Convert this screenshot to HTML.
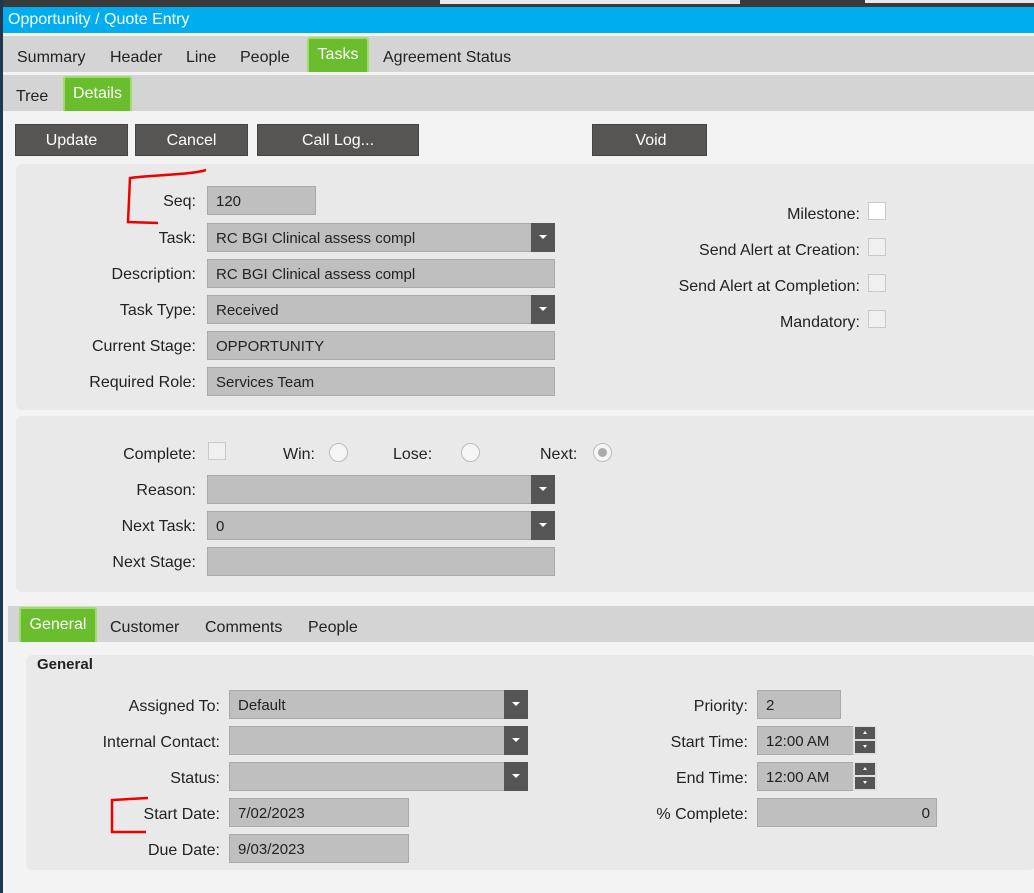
<!DOCTYPE html>
<html><head><meta charset="utf-8"><style>
*{box-sizing:border-box;margin:0;padding:0}
body{width:1034px;height:893px;overflow:hidden;background:#f3f3f4;font-family:"Liberation Sans",sans-serif;font-size:16px;color:#222;position:relative}
.a{position:absolute}
.lbl{position:absolute;text-align:right;white-space:nowrap}
.fld{position:absolute;background:#bfbfbf;border:1px solid #a9a9a9;height:29px;padding-left:8px;line-height:29px;font-size:15px;white-space:nowrap}
.dd{position:absolute;right:-1px;top:-1px;width:24px;height:29px;background:#555;}
.dd:after{content:"";position:absolute;left:8px;top:12px;border-left:4px solid transparent;border-right:4px solid transparent;border-top:4px solid #fff}
.btn{position:absolute;background:#575553;color:#fff;text-align:center;height:32px;line-height:32px;font-size:16px;border:1px solid #444}
.tab{position:absolute;font-size:16px}
.gt{position:absolute;background:#6abd2d;color:#fff;border:2px solid #9fdc6c;border-bottom:none;border-radius:3px 3px 0 0;text-align:center}
.cb{position:absolute;width:18px;height:18px;border:1px solid #c8c8c8;background:#f0f0f0}
.rd{position:absolute;width:19px;height:19px;border:1px solid #bcbcbc;border-radius:50%;background:#f5f5f5}
.sp{position:absolute;width:24px;height:29px;background:#e0e0e0;}
.sp i{position:absolute;left:2px;width:20px;height:12px;background:#555}
.sp i:after{content:"";position:absolute;left:8px;top:4px;border-left:2px solid transparent;border-right:2px solid transparent}
.sp .u{top:1px}.sp .u:after{border-bottom:3px solid #fff}
.sp .d{top:15px}.sp .d:after{border-top:3px solid #fff}
</style></head><body>
<div class="a" style="left:0;top:0;width:1034px;height:7px;background:#3a3a3a"></div>
<div class="a" style="left:440px;top:0;width:300px;height:4px;background:#e8e8e8"></div>
<div class="a" style="left:865px;top:0;width:169px;height:3px;background:#e8e8e8"></div>
<div class="a" style="left:0;top:0;width:3px;height:893px;background:#1c3a4f"></div>
<div class="a" style="left:3px;top:7px;width:1031px;height:26px;background:#00adef;color:#fff;font-size:16px;line-height:26px;padding-left:5px">Opportunity / Quote Entry</div>
<div class="a" style="left:3px;top:36px;width:1031px;height:36px;background:#d4d4d4"></div>
<div class="tab" style="left:17px;top:49px">Summary</div>
<div class="tab" style="left:110px;top:49px">Header</div>
<div class="tab" style="left:186px;top:49px">Line</div>
<div class="tab" style="left:240px;top:49px">People</div>
<div class="gt" style="left:307px;top:37px;width:62px;height:35px;line-height:32px">Tasks</div>
<div class="tab" style="left:383px;top:49px">Agreement Status</div>
<div class="a" style="left:3px;top:75px;width:1031px;height:36px;background:#d4d4d4"></div>
<div class="tab" style="left:16px;top:88px">Tree</div>
<div class="gt" style="left:63px;top:76px;width:69px;height:35px;line-height:32px">Details</div>

<div class="btn" style="left:15px;top:124px;width:113px">Update</div>
<div class="btn" style="left:135px;top:124px;width:113px">Cancel</div>
<div class="btn" style="left:257px;top:124px;width:162px">Call Log...</div>
<div class="btn" style="left:592px;top:124px;width:115px;padding-left:3px">Void</div>

<div class="a" style="left:16px;top:164px;width:1030px;height:246px;background:#e9e9e9;border-radius:6px"></div>
<div class="lbl" style="right:838px;top:193px">Seq:</div><div class="fld" style="left:207px;top:186px;width:109px">120</div>
<div class="lbl" style="right:838px;top:230px">Task:</div><div class="fld" style="left:207px;top:223px;width:348px">RC BGI Clinical assess compl<div class="dd"></div></div>
<div class="lbl" style="right:838px;top:266px">Description:</div><div class="fld" style="left:207px;top:259px;width:348px">RC BGI Clinical assess compl</div>
<div class="lbl" style="right:838px;top:302px">Task Type:</div><div class="fld" style="left:207px;top:295px;width:348px">Received<div class="dd"></div></div>
<div class="lbl" style="right:838px;top:338px">Current Stage:</div><div class="fld" style="left:207px;top:331px;width:348px">OPPORTUNITY</div>
<div class="lbl" style="right:838px;top:374px">Required Role:</div><div class="fld" style="left:207px;top:367px;width:348px">Services Team</div>
<div class="lbl" style="right:174px;top:206px">Milestone:</div><div class="cb" style="left:868px;top:202px;background:#fff"></div>
<div class="lbl" style="right:174px;top:242px">Send Alert at Creation:</div><div class="cb" style="left:868px;top:238px"></div>
<div class="lbl" style="right:174px;top:278px">Send Alert at Completion:</div><div class="cb" style="left:868px;top:274px"></div>
<div class="lbl" style="right:174px;top:314px">Mandatory:</div><div class="cb" style="left:868px;top:310px"></div>

<div class="a" style="left:16px;top:416px;width:1030px;height:176px;background:#e9e9e9;border-radius:6px"></div>
<div class="lbl" style="right:838px;top:446px">Complete:</div><div class="cb" style="left:208px;top:442px"></div>
<div class="lbl" style="left:283px;top:446px">Win:</div><div class="rd" style="left:329px;top:443px"></div>
<div class="lbl" style="left:393px;top:446px">Lose:</div><div class="rd" style="left:461px;top:443px"></div>
<div class="lbl" style="left:540px;top:446px">Next:</div><div class="rd" style="left:593px;top:443px"><div class="a" style="left:4px;top:4px;width:9px;height:9px;border-radius:50%;background:#aaa"></div></div>
<div class="lbl" style="right:838px;top:482px">Reason:</div><div class="fld" style="left:207px;top:475px;width:348px"><div class="dd"></div></div>
<div class="lbl" style="right:838px;top:518px">Next Task:</div><div class="fld" style="left:207px;top:511px;width:348px">0<div class="dd"></div></div>
<div class="lbl" style="right:838px;top:554px">Next Stage:</div><div class="fld" style="left:207px;top:547px;width:348px"></div>

<div class="a" style="left:8px;top:606px;width:1026px;height:36px;background:#d4d4d4"></div>
<div class="gt" style="left:19px;top:607px;width:78px;height:35px;line-height:32px">General</div>
<div class="tab" style="left:110px;top:619px">Customer</div>
<div class="tab" style="left:205px;top:619px">Comments</div>
<div class="tab" style="left:308px;top:619px">People</div>

<div class="a" style="left:26px;top:655px;width:1010px;height:215px;background:#e9e9e9;border-radius:6px"></div>
<div class="a" style="left:37px;top:656px;font-weight:bold;font-size:15px">General</div>
<div class="lbl" style="right:814px;top:698px">Assigned To:</div><div class="fld" style="left:229px;top:690px;width:299px">Default<div class="dd"></div></div>
<div class="lbl" style="right:814px;top:734px">Internal Contact:</div><div class="fld" style="left:229px;top:726px;width:299px"><div class="dd"></div></div>
<div class="lbl" style="right:814px;top:770px">Status:</div><div class="fld" style="left:229px;top:762px;width:299px"><div class="dd"></div></div>
<div class="lbl" style="right:814px;top:806px">Start Date:</div><div class="fld" style="left:229px;top:798px;width:180px">7/02/2023</div>
<div class="lbl" style="right:814px;top:842px">Due Date:</div><div class="fld" style="left:229px;top:834px;width:180px">9/03/2023</div>
<div class="lbl" style="right:286px;top:698px">Priority:</div><div class="fld" style="left:757px;top:690px;width:84px">2</div>
<div class="lbl" style="right:286px;top:734px">Start Time:</div><div class="fld" style="left:757px;top:726px;width:120px">12:00 AM<div class="sp" style="right:-1px;top:-1px"><i class="u"></i><i class="d"></i></div></div>
<div class="lbl" style="right:286px;top:770px">End Time:</div><div class="fld" style="left:757px;top:762px;width:120px">12:00 AM<div class="sp" style="right:-1px;top:-1px"><i class="u"></i><i class="d"></i></div></div>
<div class="lbl" style="right:286px;top:806px">% Complete:</div><div class="fld" style="left:757px;top:798px;width:180px;text-align:right;padding-right:6px">0</div>

<svg class="a" style="left:0;top:0" width="1034" height="893">
<path d="M206 170 C190 175 150 175 130 178 L128 222 L158 223" stroke="#e00" stroke-width="2.5" fill="none"/>
<path d="M148 798 L112 800 L112 832 L146 832" stroke="#e00" stroke-width="2.5" fill="none"/>
</svg>
</body></html>
